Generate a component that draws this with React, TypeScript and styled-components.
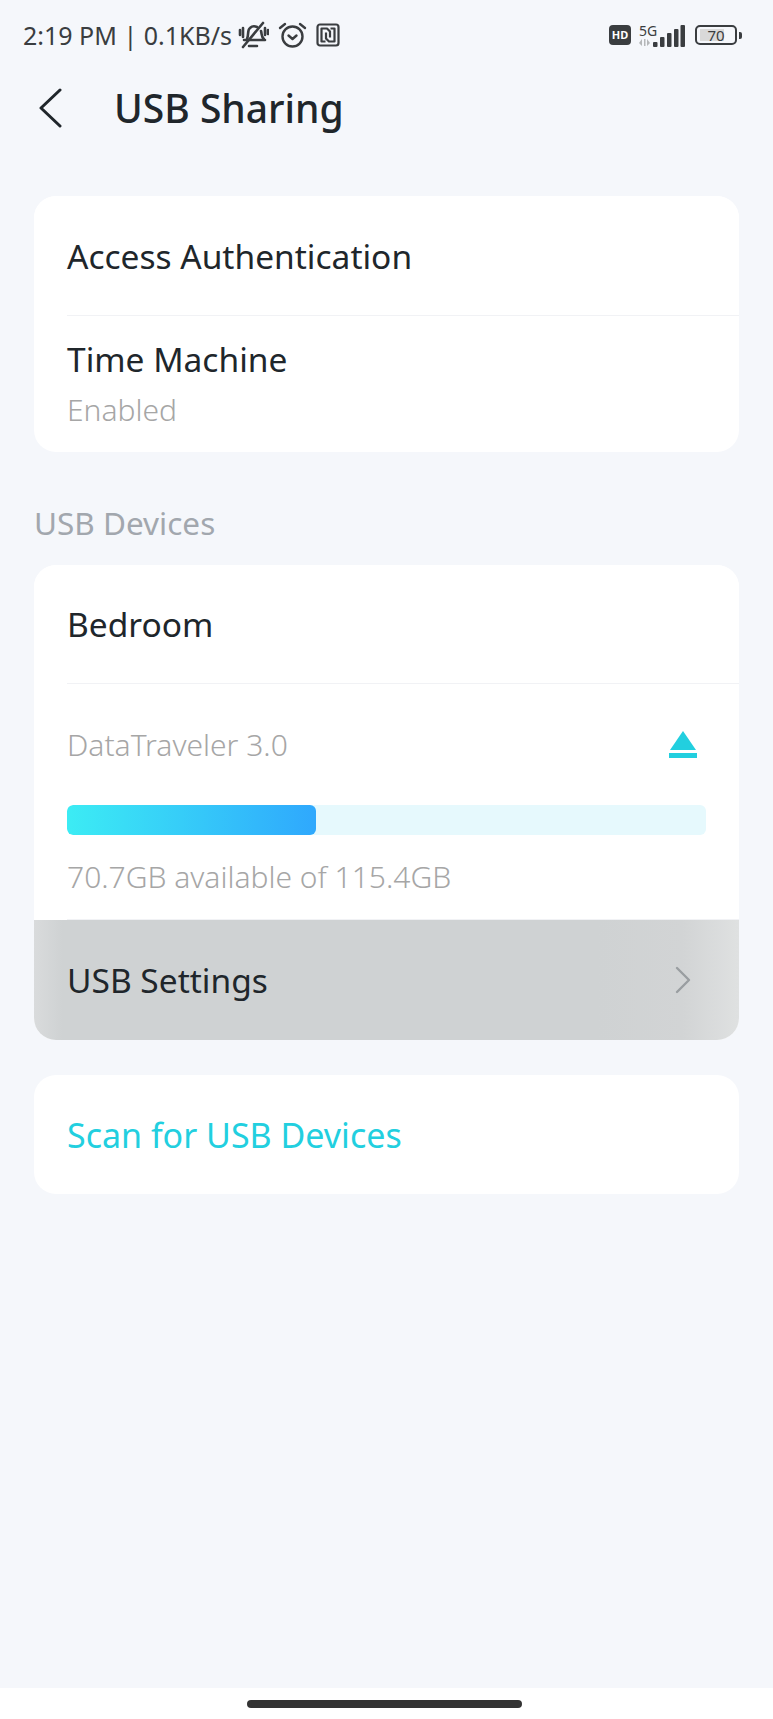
import styled, { createGlobalStyle } from 'styled-components';

const GlobalStyle = createGlobalStyle`
  html, body {
    margin: 0;
    padding: 0;
    background: #f5f7fb;
  }
  * {
    box-sizing: border-box;
  }
`;

const Page = styled.div`
  width: 773px;
  height: 1719px;
  display: flex;
  flex-direction: column;
  background: #f5f7fb;
  font-family: 'Noto Sans', 'Open Sans', sans-serif;
  color: #20262b;
  overflow: hidden;
`;

const StatusBar = styled.div`
  height: 70px;
  padding: 0 31px 0 23px;
  display: flex;
  align-items: center;
  justify-content: space-between;
  color: #3a3d40;
`;

const StatusGroup = styled.div`
  display: flex;
  align-items: center;
`;

const StatusText = styled.span`
  font-size: 25px;
  line-height: 30px;
  margin-right: 6px;
  white-space: nowrap;
`;

const StatusIcon = styled.svg`
  display: block;
  margin-right: 9px;
`;

const HdBadge = styled.span`
  width: 22px;
  height: 20px;
  border-radius: 4px;
  background: #3a3d40;
  color: #fff;
  font-size: 11px;
  font-weight: 700;
  line-height: 20px;
  text-align: center;
  margin-right: 8px;
`;

const Network = styled.div`
  width: 46px;
  height: 24px;
  display: flex;
  align-items: flex-end;
  margin-right: 10px;
`;

const NetworkLabel = styled.div`
  width: 20px;
  margin-right: -6px;
  display: flex;
  flex-direction: column;
  align-items: flex-start;
  font-size: 14px;
  line-height: 14px;
`;

const Battery = styled.div`
  width: 42px;
  height: 20px;
  padding: 2px 3px;
  border: 2px solid #3a3d40;
  border-radius: 5px;
  display: flex;
`;

const BatteryFill = styled.div`
  flex: 1;
  background: linear-gradient(90deg, #d9d9d9 0, #d9d9d9 75%, transparent 75%);
  font-size: 15px;
  line-height: 12px;
  text-align: center;
`;

const BatteryNub = styled.div`
  width: 3px;
  height: 7px;
  margin-left: 2px;
  border-radius: 0 2px 2px 0;
  background: #3a3d40;
`;

const Header = styled.div`
  height: 80px;
  padding: 0 0 4px 37px;
  display: flex;
  align-items: center;
`;

const Title = styled.h1`
  margin: 0 0 0 51px;
  font-size: 39px;
  font-weight: 500;
  line-height: 50px;
`;

const Content = styled.div`
  flex: 1;
  padding: 46px 34px 0;
  display: flex;
  flex-direction: column;
`;

const Card = styled.div`
  background: #fff;
  border-radius: 22px;
  overflow: hidden;
  margin-bottom: 35px;
`;

const Row = styled.div<{ $height: number; $pressed?: boolean }>`
  height: ${(p) => p.$height}px;
  padding: 0 48px 0 33px;
  display: flex;
  align-items: center;
  justify-content: space-between;
  background: ${(p) =>
    p.$pressed
      ? 'linear-gradient(90deg, #d9dbdc 0, #cfd2d3 4%, #cfd2d3 80%, #d2d4d5 92%, #dfe1e1 100%)'
      : '#fff'};
`;

const StackRow = styled.div`
  height: 136px;
  padding: 0 33px 2px;
  display: flex;
  flex-direction: column;
  justify-content: center;
  gap: 10px;
`;

const Divider = styled.div`
  height: 1px;
  margin-left: 33px;
  background: #f1f2f5;
`;

const Label = styled.span<{ $accent?: boolean }>`
  font-size: ${(p) => (p.$accent ? 34 : 33.5)}px;
  line-height: 44px;
  color: ${(p) => (p.$accent ? '#22cfdf' : '#20262b')};
`;

const Sub = styled.span`
  font-size: 30px;
  font-weight: 300;
  line-height: 38px;
  color: #a6a6a6;
`;

const SectionTitle = styled.div`
  height: 78px;
  padding-top: 16px;
  font-size: 31.5px;
  line-height: 40px;
  color: #a2a7ae;
`;

const Storage = styled.div`
  height: 235px;
  padding: 0 33px;
  display: flex;
  flex-direction: column;
`;

const StorageHead = styled.div`
  height: 94px;
  padding: 27px 9px 0 0;
  display: flex;
  align-items: center;
  justify-content: space-between;
`;

const Track = styled.div`
  height: 30px;
  margin-top: 27px;
  border-radius: 6px;
  background: #e6f9fd;
  overflow: hidden;
`;

const Fill = styled.div`
  height: 100%;
  border-radius: 6px;
  background: linear-gradient(90deg, #3cecf4, #2fa8fd);
`;

const StorageNote = styled(Sub)`
  margin-top: 23px;
`;

const Spacer = styled.div`
  flex: 1;
`;

const HomeArea = styled.div`
  height: 31px;
  display: flex;
  justify-content: center;
  padding: 12px 4px 0 0;
  background: #fff;
`;

const HomeBar = styled.div`
  width: 275px;
  height: 8px;
  border-radius: 4px;
  background: #333;
`;

const FREE_GB = 70.7;
const TOTAL_GB = 115.4;

export default function App() {
  const usedPercent = Math.ceil(((TOTAL_GB - FREE_GB) / TOTAL_GB) * 100);

  return (
    <>
      <GlobalStyle />
      <Page>
        <StatusBar>
          <StatusGroup>
            <StatusText>2:19 PM | 0.1KB/s</StatusText>
            <StatusIcon width="31" height="28" viewBox="0 0 31 28" fill="none" stroke="#3a3d40" strokeWidth="2.6" strokeLinecap="round">
              <path d="M6 19h21M9 18c2-4 0-9 3-11 2-2 5-2 7-1M23 10c1 3 0 6 3 8" />
              <path d="M11 25h8M2 9v5M5 7v9M27 7v7M30 9v4" />
              <path d="M5 26 25 2" />
            </StatusIcon>
            <StatusIcon width="29" height="26" viewBox="0 0 29 26" fill="none" stroke="#3a3d40" strokeWidth="2.4" strokeLinecap="round" strokeLinejoin="round">
              <circle cx="14.5" cy="14.5" r="10" />
              <path d="M10.5 13.500l4 3.500 4-3.500M2 6l5-4M27 6l-5-4" />
            </StatusIcon>
            <StatusIcon width="24" height="24" viewBox="0 0 24 24" fill="none" stroke="#3a3d40" strokeWidth="2.2" strokeLinejoin="round">
              <rect x="1.500" y="1.500" width="21" height="21" rx="2.500" />
              <path d="M9.500 18.500H5.500v-13h5.500l3 3v6" />
              <path d="M14.500 5.500h4v13H13l-3-3v-6" />
            </StatusIcon>
          </StatusGroup>
          <StatusGroup>
            <HdBadge>HD</HdBadge>
            <Network>
              <NetworkLabel>
                5G
                <svg width="13" height="9" viewBox="0 0 13 9" fill="#b5b7b9">
                  <path d="M0 5l3-4v7zM5 1h1.500v7H5zM8 1l3 4-3 3z" />
                </svg>
              </NetworkLabel>
              <svg width="32" height="22" viewBox="0 0 32 22" fill="#3a3d40">
                <rect x="0" y="17" width="4.500" height="5" rx="1" />
                <rect x="7" y="12" width="4.500" height="10" rx="1" />
                <rect x="14" y="8" width="4.500" height="14" rx="1" />
                <rect x="21" y="4" width="4.500" height="18" rx="1" />
                <rect x="27.500" y="0" width="4.500" height="22" rx="1" />
              </svg>
            </Network>
            <Battery>
              <BatteryFill>70</BatteryFill>
            </Battery>
            <BatteryNub />
          </StatusGroup>
        </StatusBar>

        <Header>
          <svg width="26" height="40" viewBox="0 0 26 40" fill="none" stroke="#20262b" strokeWidth="3" strokeLinecap="round" strokeLinejoin="round">
            <path d="M23 2 4 20l19 18" />
          </svg>
          <Title>USB Sharing</Title>
        </Header>

        <Content>
          <Card>
            <Row $height={119}>
              <Label>Access Authentication</Label>
            </Row>
            <Divider />
            <StackRow>
              <Label>Time Machine</Label>
              <Sub>Enabled</Sub>
            </StackRow>
          </Card>

          <SectionTitle>USB Devices</SectionTitle>

          <Card>
            <Row $height={118}>
              <Label>Bedroom</Label>
            </Row>
            <Divider />
            <Storage>
              <StorageHead>
                <Sub>DataTraveler 3.0</Sub>
                <svg width="28" height="27" viewBox="0 0 28 27" fill="#22cfdf">
                  <path d="M14 0 27 19H1z" />
                  <rect x="0" y="22" width="28" height="5" />
                </svg>
              </StorageHead>
              <Track>
                <Fill style={{ width: `${usedPercent}%` }} />
              </Track>
              <StorageNote>70.7GB available of 115.4GB</StorageNote>
            </Storage>
            <Divider />
            <Row $height={120} $pressed>
              <Label>USB Settings</Label>
              <svg width="16" height="28" viewBox="0 0 16 28" fill="none" stroke="#9a9ea1" strokeWidth="2.400" strokeLinecap="round" strokeLinejoin="round">
                <path d="M2 2l12 12L2 26" />
              </svg>
            </Row>
          </Card>

          <Card>
            <Row $height={119}>
              <Label $accent>Scan for USB Devices</Label>
            </Row>
          </Card>

          <Spacer />
        </Content>

        <HomeArea>
          <HomeBar />
        </HomeArea>
      </Page>
    </>
  );
}
